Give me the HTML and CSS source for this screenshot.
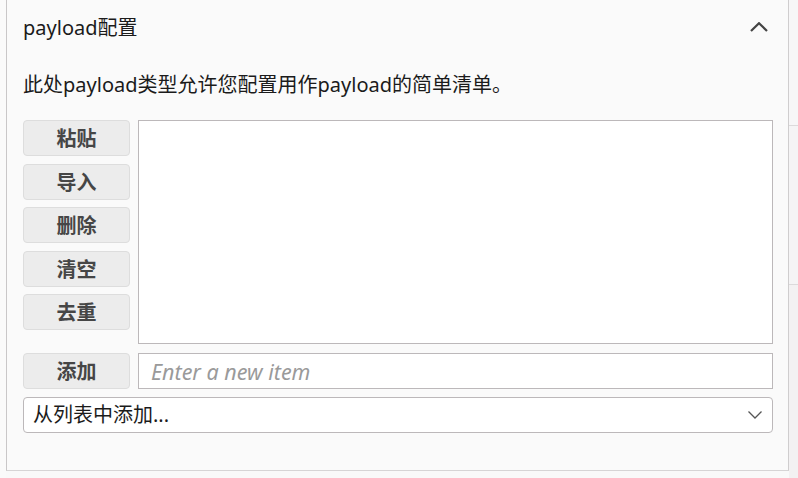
FILE: index.html
```html
<!DOCTYPE html>
<html lang="zh-CN">
<head>
<meta charset="utf-8">
<title>payload配置</title>
<link rel="stylesheet" href="styles.css">
</head>
<body>
<div class="page">
  <div class="gutter"></div>
  <section class="panel">
    <header class="panel-head">
      <h2 class="title">payload配置</h2>
      <button class="collapse" type="button" aria-label="收起">
        <svg width="18" height="10" viewBox="0 0 18 10"><polyline points="1,9 9,1.2 17,9" fill="none" stroke="#444" stroke-width="2.2"/></svg>
      </button>
    </header>
    <div class="panel-body">
      <p class="desc">此处payload类型允许您配置用作payload的简单清单。</p>
      <div class="list-editor">
        <div class="btn-col">
          <button class="btn" type="button">粘贴</button>
          <button class="btn" type="button">导入</button>
          <button class="btn" type="button">删除</button>
          <button class="btn" type="button">清空</button>
          <button class="btn" type="button">去重</button>
        </div>
        <div class="list-box"></div>
      </div>
      <div class="add-row">
        <button class="btn" type="button">添加</button>
        <input class="item-input" type="text" placeholder="Enter a new item">
      </div>
      <div class="select">
        <span class="select-text">从列表中添加...</span>
        <svg width="16" height="10" viewBox="0 0 16 10"><polyline points="1.5,1.5 8,8 14.5,1.5" fill="none" stroke="#555" stroke-width="1.3"/></svg>
      </div>
    </div>
  </section>
  <aside class="side-strip">
    <div class="strip-a"></div>
    <div class="strip-b"></div>
    <div class="strip-c"></div>
  </aside>
</div>
</body>
</html>
```

FILE: styles.css
```css
html, body {
  margin: 0;
  padding: 0;
}
body {
  width: 798px;
  height: 478px;
  overflow: hidden;
  background: #f9f9f9;
  font-family: "Noto Sans", "Noto Sans CJK SC", sans-serif;
  color: #1b1b1b;
}
.page {
  display: flex;
  height: 478px;
}
.gutter {
  width: 6px;
  flex: none;
  background: #fafafa;
}
.panel {
  width: 781px;
  height: 470px;
  flex: none;
  background: #fafafa;
  border-left: 1px solid #c9c7c8;
  border-right: 1px solid #cfcdce;
  border-bottom: 1px solid #d6d4d5;
  box-sizing: content-box;
}
.panel-head {
  display: flex;
  align-items: center;
  justify-content: space-between;
  padding: 16px 15px 0 16px;
  height: 24px;
}
.title {
  margin: 0;
  font-size: 20px;
  font-weight: normal;
  line-height: 24px;
}
.collapse {
  border: 0;
  background: none;
  padding: 0;
  margin-right: 5px;
  display: flex;
  margin-top: -2px;
}
.panel-body {
  padding: 0 15px 0 16px;
}
.desc {
  margin: 33px 0 0;
  font-size: 20px;
  line-height: 24px;
}
.list-editor {
  display: flex;
  gap: 8px;
  margin-top: 23px;
}
.btn-col {
  display: flex;
  flex-direction: column;
  gap: 7.5px;
}
.btn {
  width: 107px;
  height: 36px;
  box-sizing: border-box;
  background: #ececec;
  border: 1px solid #dddddd;
  border-radius: 4px;
  font-family: "Noto Sans CJK SC", sans-serif;
  font-size: 20px;
  font-weight: bold;
  color: #464646;
  padding: 0;
  line-height: 1;
  display: flex;
  align-items: center;
  justify-content: center;
}
.list-box {
  flex: 1;
  height: 224px;
  box-sizing: border-box;
  background: #ffffff;
  border: 1px solid #bcb8ba;
}
.add-row {
  display: flex;
  gap: 8px;
  margin-top: 9px;
}
.item-input {
  flex: 1;
  height: 36px;
  box-sizing: border-box;
  border: 1px solid #bcb8ba;
  background: #ffffff;
  margin: 0;
  padding: 0 12px;
  font-family: "Noto Sans", "Noto Sans CJK SC", sans-serif;
  font-size: 21.5px;
  font-style: italic;
  color: #333;
  outline: none;
}
.item-input::placeholder {
  color: #9a9a9a;
  font-style: italic;
}
.select {
  margin-top: 7.5px;
  height: 36px;
  box-sizing: border-box;
  border: 1px solid #bcb8ba;
  border-radius: 4px;
  background: #ffffff;
  display: flex;
  align-items: center;
  justify-content: space-between;
  padding: 0 9px 0 9px;
}
.select-text {
  font-size: 20px;
  line-height: 24px;
}
.side-strip {
  flex: 1;
  display: flex;
  flex-direction: column;
  background: #f3f1f2;
}
.strip-a {
  height: 125px;
  background: #f7f6f7;
  border-bottom: 1px solid #dcdadb;
  flex: none;
}
.strip-b {
  height: 158px;
  background: #f5f4f5;
  border-bottom: 1px solid #dcdadb;
  flex: none;
}
.strip-c {
  flex: 1;
}
```
